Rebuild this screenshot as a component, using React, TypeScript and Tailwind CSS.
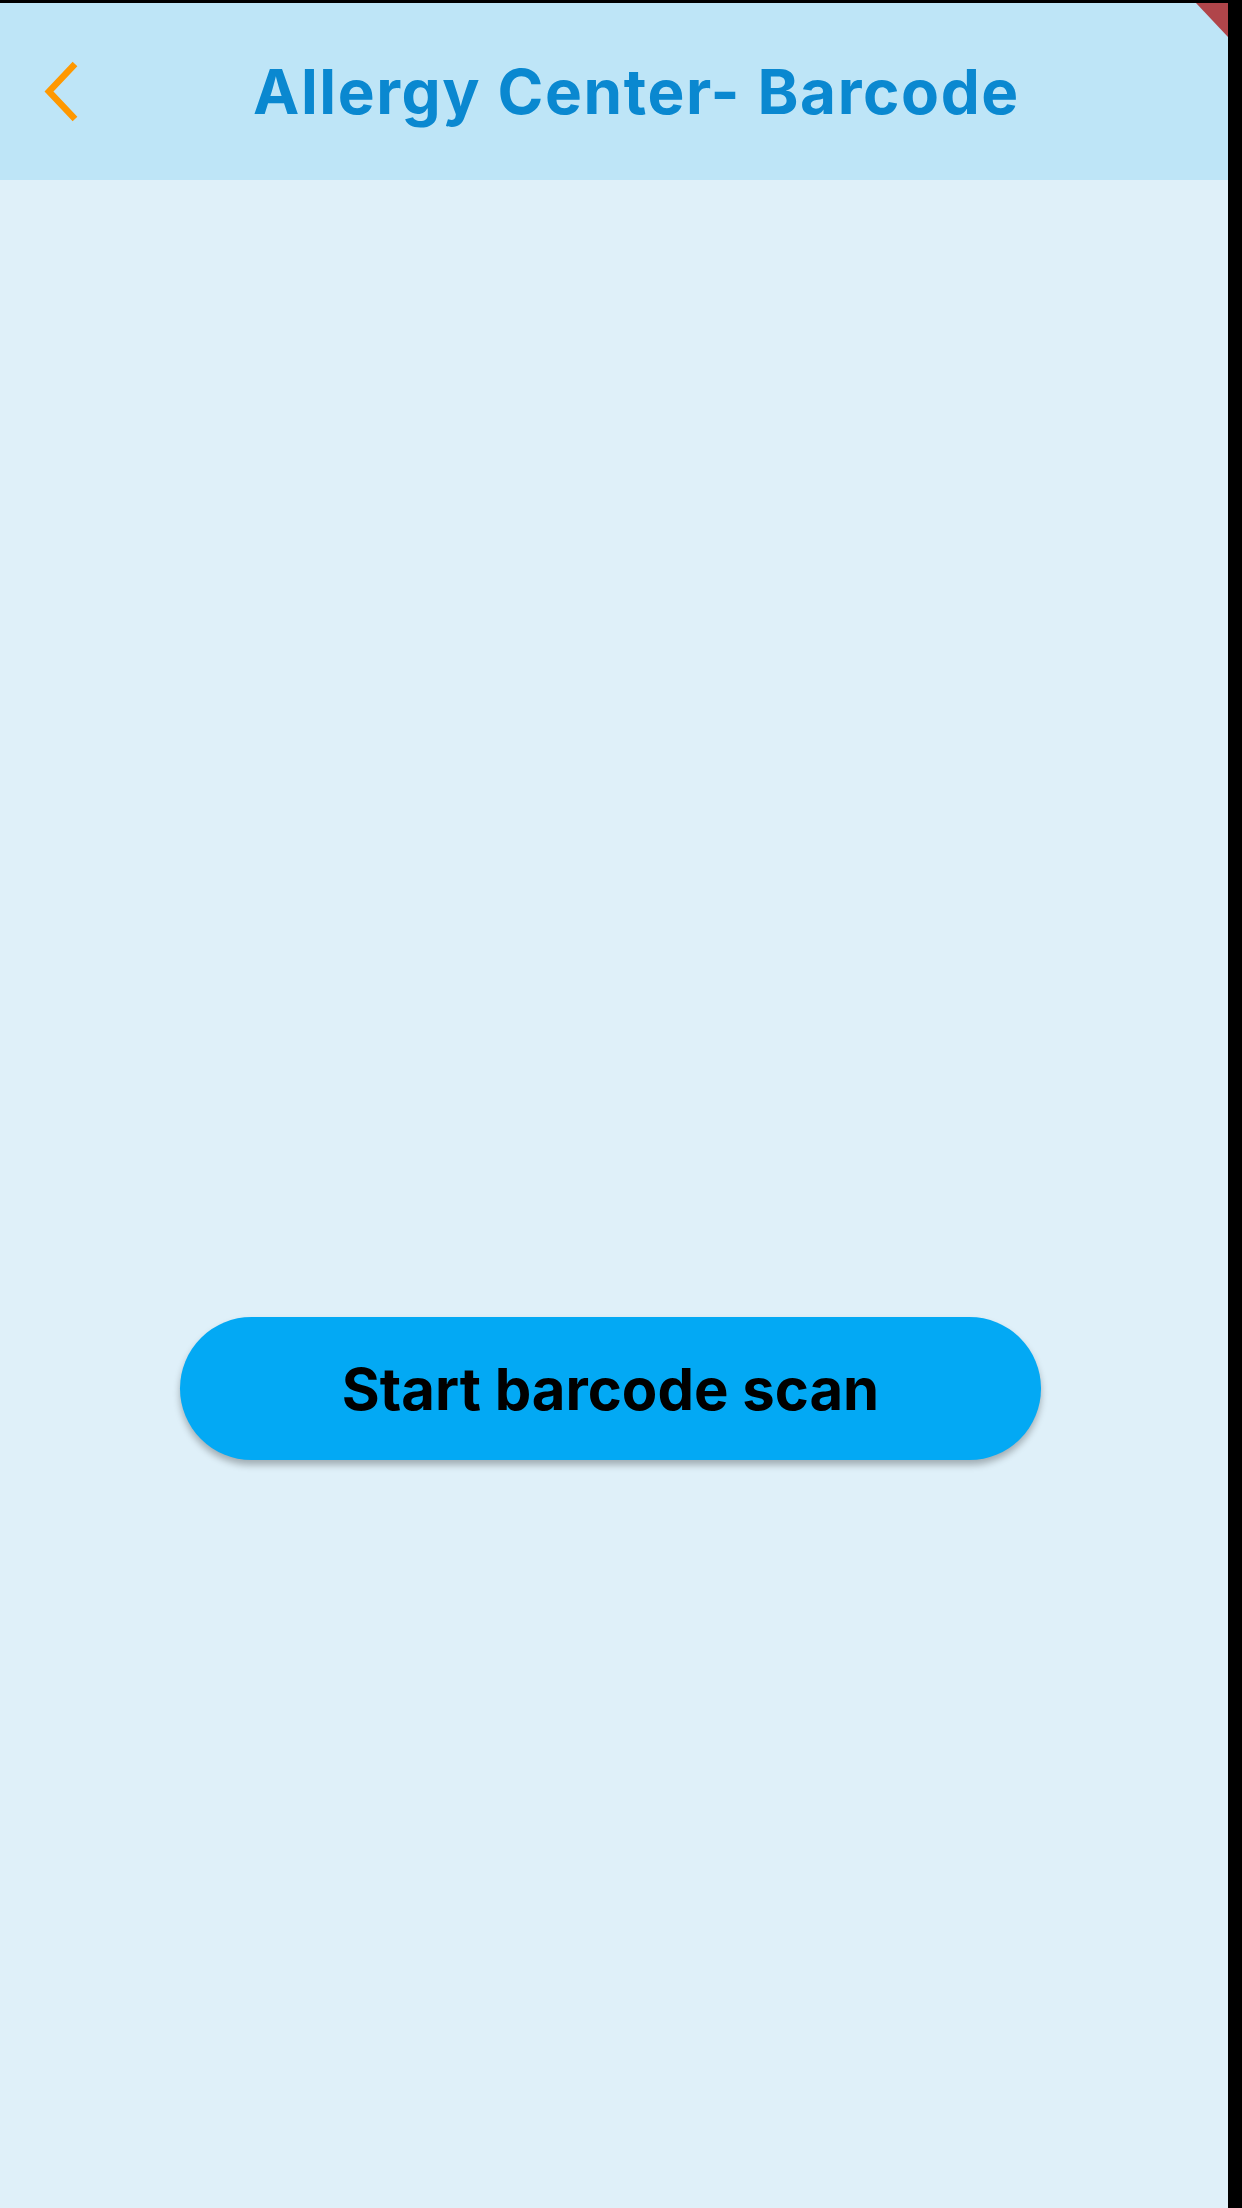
export default function App() {
  return (
    <div className="flex h-[2208px] w-[1242px] flex-col bg-black font-['Inter','Liberation_Sans',sans-serif]">
      {/* top strip */}
      <div className="h-[3px] shrink-0" />

      <div className="relative flex w-[1228px] flex-1 flex-col bg-[#dff0f9]">
        {/* App bar */}
        <header className="flex h-[177px] shrink-0 items-center bg-[#bee5f7]">
          <svg
            className="ml-[40px] shrink-0"
            width="40"
            height="64"
            viewBox="0 0 40 64"
            fill="none"
          >
            <polyline
              points="35,4 9,31.5 35,59"
              stroke="#ff9800"
              strokeWidth="6.5"
              strokeLinecap="butt"
              strokeLinejoin="miter"
            />
          </svg>
          <h1 className="ml-[173px] text-[62px] leading-none font-bold tracking-[1.6px] text-[#0a88d0]">
            Allergy Center- Barcode
          </h1>
        </header>

        {/* Body */}
        <main className="flex flex-1 flex-col pt-[1137px]">
          <button className="ml-[180px] flex h-[143px] w-[861px] items-center justify-center rounded-full bg-[#03a9f4] shadow-[0_5px_7px_rgba(0,0,0,0.28)]">
            <span className="text-[58px] leading-none font-bold text-black">
              Start barcode scan
            </span>
          </button>
        </main>

        {/* debug banner corner */}
        <svg
          className="absolute top-0 right-0"
          width="32"
          height="34"
          viewBox="0 0 32 34"
        >
          <polygon points="0,0 32,0 32,34" fill="#b0454a" />
        </svg>
      </div>
    </div>
  );
}
